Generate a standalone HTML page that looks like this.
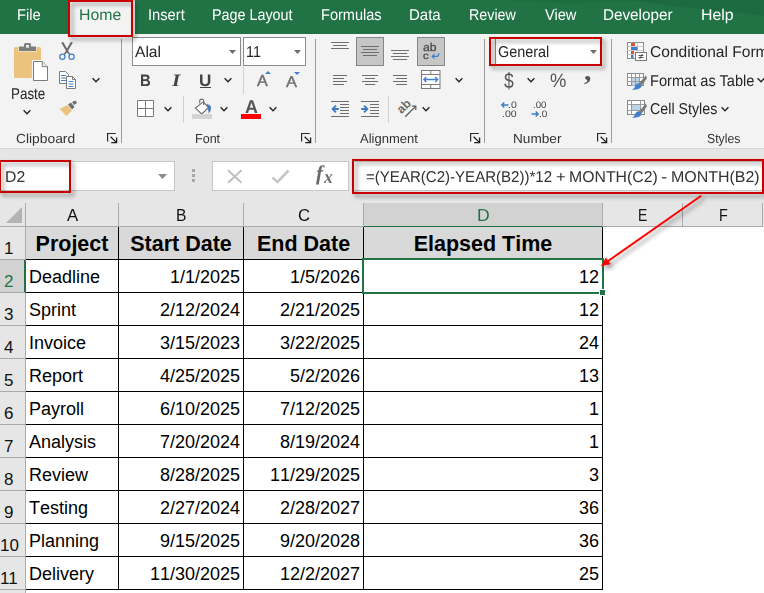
<!DOCTYPE html>
<html lang="en">
<head>
<meta charset="utf-8">
<title>Excel - Elapsed Time</title>
<style>
*{box-sizing:border-box;margin:0;padding:0}
html,body{width:764px;height:593px;overflow:hidden;background:#fff}
body{font-family:"Liberation Sans",sans-serif;color:#262626;position:relative}
#app{position:absolute;left:0;top:0;width:764px;height:593px;overflow:hidden;background:#fff}
.abs{position:absolute}
.t{position:absolute;white-space:nowrap;line-height:1;transform-origin:0 0;text-rendering:geometricPrecision}
#tabs{position:absolute;left:0;top:0;width:764px;height:34px;background:#217346;overflow:hidden}
#ribbon{position:absolute;left:0;top:34px;width:764px;height:114px;background:#f3f3f3}
#ribline{position:absolute;left:0;top:148px;width:764px;height:1px;background:#d4d4d4}
.gsep{position:absolute;width:1px;top:39px;height:104px;background:#9c9c9c}
.ssep{position:absolute;width:1px;background:#d0d0d0}
.ico{position:absolute;overflow:visible}
#fbar{position:absolute;left:0;top:149px;width:764px;height:55px;background:#e6e6e6}
.fbox{position:absolute;background:#fff;border:1px solid #c6c6c6}
.red{position:absolute;border:2px solid #c80000;filter:drop-shadow(3px 3px 2.2px rgba(0,0,0,.42))}
#grid{position:absolute;left:0;top:204px;width:764px;height:389px;background:#fff}
.ch{position:absolute;top:203px;height:24px;background:#e6e6e6;border-right:1px solid #ababab;border-bottom:1px solid #ababab}
.rh{position:absolute;left:0;width:26px;background:#e6e6e6;border-right:1px solid #ababab;border-bottom:1px solid #ababab}
.c{position:absolute;border-right:1px solid #000;border-bottom:1px solid #000;font-size:18px;color:#000;white-space:nowrap;font-kerning:none}
.c span{position:absolute;line-height:1;top:7.79px}
.c.l span{left:3px}
.c.r span{right:3px}
.c.h{background:#d9d9d9;font-weight:bold;font-size:21.5px}
.c.h span{left:0;right:0;text-align:center;top:7px}
</style>
</head>
<body>
<div id="app">
<div id="tabs"><svg class="ico" style="left:0;top:0" width="764" height="34" viewBox="0 0 764 34"><path d="M634 0H764V16Q730 11 700 9Q665 6 634 0Z" fill="#1e6a40"/><path d="M500 0H640Q600 4 560 3Q530 3 500 0Z" fill="#1f6e42"/></svg></div>
<div id="ribbon"></div>
<div id="ribline"></div>
<div class="abs" style="left:70px;top:2px;width:62px;height:34px;background:#f3f3f3"></div>
<div class="t" style="left:16.73px;top:8px;font-size:15.7px;transform:scaleX(0.9376);color:#fff">File</div>
<div class="t" style="left:79.34px;top:8px;font-size:15.7px;transform:scaleX(1.0100);color:#217346">Home</div>
<div class="t" style="left:148.29px;top:8px;font-size:15.7px;transform:scaleX(0.9377);color:#fff">Insert</div>
<div class="t" style="left:212.46px;top:8px;font-size:15.7px;transform:scaleX(0.9141);color:#fff">Page Layout</div>
<div class="t" style="left:320.54px;top:8px;font-size:15.7px;transform:scaleX(0.9276);color:#fff">Formulas</div>
<div class="t" style="left:408.80px;top:8px;font-size:15.7px;transform:scaleX(0.9563);color:#fff">Data</div>
<div class="t" style="left:468.76px;top:8px;font-size:15.7px;transform:scaleX(0.9114);color:#fff">Review</div>
<div class="t" style="left:544.50px;top:8px;font-size:15.7px;transform:scaleX(0.9304);color:#fff">View</div>
<div class="t" style="left:603.39px;top:8px;font-size:15.7px;transform:scaleX(0.9714);color:#fff">Developer</div>
<div class="t" style="left:700.74px;top:8px;font-size:15.7px;transform:scaleX(1.0098);color:#fff">Help</div>
<div class="gsep" style="left:121px"></div>
<div class="gsep" style="left:315px"></div>
<div class="gsep" style="left:484px"></div>
<div class="gsep" style="left:611px"></div>
<svg class="ico" style="left:13px;top:42px" width="36" height="40" viewBox="0 0 36 40">
<rect x="1" y="5" width="27" height="31" rx="1.5" fill="#ecc37c"/>
<path d="M6 4.5H11V2.5Q11 1 12.5 1H16.5Q18 1 18 2.5V4.5H23V9H6Z" fill="#7d7d7d" stroke="#f3f3f3" stroke-width="1.2" paint-order="stroke"/>
<rect x="13.1" y="2.9" width="2.8" height="2.8" fill="#f3f3f3"/>
<path d="M20.5 19.5H29.3L34.5 24.7V38.5H20.5Z" fill="#fff" stroke="#f3f3f3" stroke-width="3.2"/>
<path d="M20.5 19.5H29.3L34.5 24.7V38.5H20.5Z" fill="#fff" stroke="#7a7a7a" stroke-width="1"/>
<path d="M29.3 19.5V24.7H34.5" fill="#f0f0f0" stroke="#7a7a7a" stroke-width="1"/>
</svg>
<div class="t" style="left:10.83px;top:87px;font-size:15.7px;transform:scaleX(0.8549);color:#262626">Paste</div>
<svg class="ico" style="left:22.2px;top:108.1px" width="10" height="8" viewBox="0 0 10 8"><path d="M1.6 2.3L5 5.7L8.4 2.3" stroke="#262626" stroke-width="1.4" fill="none"/></svg>
<svg class="ico" style="left:58px;top:41px" width="18" height="20" viewBox="0 0 18 20">
<path d="M3.1 1.6L5.3 1.1L10 9.6L12.4 13.2L11.3 13.9L8.9 11.2Z" fill="#6a6a6a"/>
<path d="M14.9 1.6L12.7 1.1L8 9.6L5.6 13.2L6.7 13.9L9.1 11.2Z" fill="#6a6a6a"/>
<circle cx="4.4" cy="15.7" r="2.6" fill="none" stroke="#3f7fcb" stroke-width="1.25"/>
<circle cx="13.6" cy="15.7" r="2.6" fill="none" stroke="#3f7fcb" stroke-width="1.25"/>
</svg>
<svg class="ico" style="left:58px;top:70px" width="20" height="20" viewBox="0 0 20 20">
<path d="M1.5 1.5H7.5L10.5 4.5V13.5H1.5Z" fill="#fff" stroke="#7a7a7a"/>
<path d="M3 5.5H8M3 8H8M3 10.5H8" stroke="#3f7fcb" stroke-width="1"/>
<path d="M8.5 6.5H14.5L17.5 9.5V18.5H8.5Z" fill="#fff" stroke="#7a7a7a"/>
<path d="M14.5 6.5V9.5H17.5" fill="none" stroke="#7a7a7a"/>
<path d="M10.5 11.5H15.5M10.5 14H15.5M10.5 16.5H15.5" stroke="#3f7fcb" stroke-width="1"/>
</svg>
<svg class="ico" style="left:91.2px;top:76.1px" width="10" height="8" viewBox="0 0 10 8"><path d="M1.6 2.3L5 5.7L8.4 2.3" stroke="#262626" stroke-width="1.4" fill="none"/></svg>
<svg class="ico" style="left:59px;top:100px" width="19" height="17" viewBox="0 0 19 17">
<path d="M0.5 9L8.5 5L13 10.5L7.5 16Z" fill="#ecc37c"/>
<path d="M9 4.5L12 2.5L15.5 7L13 9.5Z" fill="#6f6f6f"/>
<path d="M13 2L16.5 0.5L18 3L15 5Z" fill="#6f6f6f"/>
</svg>
<div class="t" style="left:15.71px;top:132px;font-size:13.1px;transform:scaleX(1.0550);color:#333">Clipboard</div>
<svg class="ico" style="left:107px;top:133px" width="11" height="11" viewBox="0 0 11 11"><path d="M0.6 8.5V0.5H8.8" stroke="#2a2a2a" stroke-width="1.2" fill="none"/><path d="M3.6 3.8L9.4 9.4M9.6 4.4V9.6H4.2" stroke="#1e1e1e" stroke-width="1.3" fill="none"/></svg>
<div class="fbox" style="left:132px;top:37px;width:109px;height:29px;border-color:#8c8c8c"></div>
<div class="t" style="left:135.10px;top:45px;font-size:15.7px;transform:scaleX(0.9941);color:#262626">Alal</div>
<svg class="ico" style="left:228.5px;top:49.5px" width="7" height="4" viewBox="0 0 7 4"><path d="M0 0H7L3.5 4Z" fill="#6e6e6e"/></svg>
<div class="fbox" style="left:243px;top:37px;width:63px;height:29px;border-color:#8c8c8c"></div>
<div class="t" style="left:246.06px;top:45px;font-size:15.7px;transform:scaleX(0.9123);color:#262626">11</div>
<svg class="ico" style="left:293.5px;top:49.5px" width="7" height="4" viewBox="0 0 7 4"><path d="M0 0H7L3.5 4Z" fill="#6e6e6e"/></svg>
<div class="t" style="left:139.59px;top:73px;font-size:16.58px;transform:scaleX(0.8998);font-weight:bold;color:#444">B</div>
<div class="t" style="left:172.21px;top:72px;font-size:17.4px;transform:scaleX(1.2099);font-family:'Liberation Serif',serif;font-style:italic;font-weight:bold;color:#444">I</div>
<div class="t" style="left:199.37px;top:73px;font-size:16.63px;transform:scaleX(1.0280);font-weight:bold;color:#444">U</div>
<div class="abs" style="left:200px;top:87px;width:11px;height:1px;background:#444"></div>
<svg class="ico" style="left:223.2px;top:76.1px" width="10" height="8" viewBox="0 0 10 8"><path d="M1.6 2.3L5 5.7L8.4 2.3" stroke="#262626" stroke-width="1.4" fill="none"/></svg>
<div class="ssep" style="left:243px;top:67px;height:27px"></div>
<div class="t" style="left:257.00px;top:74px;font-size:15.88px;transform:scaleX(1.0189);-webkit-text-stroke:0.45px #727272;color:#727272">A</div>
<svg class="ico" style="left:265px;top:71px" width="6" height="3" viewBox="0 0 6 3"><path d="M0 3H6L3 0Z" fill="#3f7fcb"/></svg>
<div class="t" style="left:286.00px;top:75px;font-size:15.6px;transform:scaleX(1.0564);-webkit-text-stroke:0.45px #727272;color:#727272">A</div>
<svg class="ico" style="left:294px;top:72px" width="6" height="3" viewBox="0 0 6 3"><path d="M0 0H6L3 3Z" fill="#3f7fcb"/></svg>
<svg class="ico" style="left:136px;top:99px" width="19" height="19" viewBox="0 0 19 19"><path d="M1.5 1.5H17.5V17.5H1.5ZM9.5 1.5V17.5M1.5 9.5H17.5" stroke="#7a7a7a" stroke-width="1" fill="#fff"/></svg>
<svg class="ico" style="left:163.2px;top:105.1px" width="10" height="8" viewBox="0 0 10 8"><path d="M1.6 2.3L5 5.7L8.4 2.3" stroke="#262626" stroke-width="1.4" fill="none"/></svg>
<div class="ssep" style="left:183px;top:96px;height:27px"></div>
<svg class="ico" style="left:191px;top:98px" width="22" height="22" viewBox="0 0 22 22">
<path d="M15.4 6Q19.6 6.6 20.1 9.8Q20.3 12.6 17.6 15.4L17 10.2Z" fill="#3f7fcb"/>
<path d="M12.3 3.9L17.5 9.6L10.7 15.9L4.4 10.1Z" fill="#fff" stroke="#6a6a6a" stroke-width="1.1"/>
<path d="M8.7 5.6V2.6Q8.9 1.1 10.7 1.1Q12.5 1.1 12.7 2.6V7" fill="none" stroke="#6a6a6a" stroke-width="1.1"/>
<rect x="1.1" y="16.1" width="19.9" height="4.8" fill="#d2d2d2"/>
</svg>
<svg class="ico" style="left:219.2px;top:105.1px" width="10" height="8" viewBox="0 0 10 8"><path d="M1.6 2.3L5 5.7L8.4 2.3" stroke="#262626" stroke-width="1.4" fill="none"/></svg>
<div class="t" style="left:244.55px;top:98px;font-size:18.47px;transform:scaleX(0.9697);font-weight:bold;color:#555">A</div>
<div class="abs" style="left:241px;top:114px;width:20px;height:5px;background:#ff0000"></div>
<svg class="ico" style="left:268.2px;top:105.1px" width="10" height="8" viewBox="0 0 10 8"><path d="M1.6 2.3L5 5.7L8.4 2.3" stroke="#262626" stroke-width="1.4" fill="none"/></svg>
<div class="t" style="left:194.94px;top:132px;font-size:13.1px;transform:scaleX(0.9584);color:#333">Font</div>
<svg class="ico" style="left:300.9px;top:133px" width="11" height="11" viewBox="0 0 11 11"><path d="M0.6 8.5V0.5H8.8" stroke="#2a2a2a" stroke-width="1.2" fill="none"/><path d="M3.6 3.8L9.4 9.4M9.6 4.4V9.6H4.2" stroke="#1e1e1e" stroke-width="1.3" fill="none"/></svg>
<div class="abs" style="left:356px;top:37px;width:28px;height:29px;background:#c6c6c6;border:1px solid #868686"></div>
<div class="abs" style="left:417px;top:37px;width:28px;height:29px;background:#c6c6c6;border:1px solid #868686"></div>
<svg class="ico" style="left:331px;top:42px" width="18" height="8" viewBox="0 0 18 8"><path d="M0 0.5H18M2 3.5H16M0 6.5H18" stroke="#6e6e6e" stroke-width="1" fill="none"/></svg>
<svg class="ico" style="left:361px;top:46px" width="18" height="11" viewBox="0 0 18 11"><path d="M0 0.5H18M2 3.5H16M0 6.5H18M2 9.5H16" stroke="#6e6e6e" stroke-width="1" fill="none"/></svg>
<svg class="ico" style="left:391px;top:50px" width="18" height="11" viewBox="0 0 18 11"><path d="M0 0.5H18M2 3.5H16M0 6.5H18M2 9.5H16" stroke="#6e6e6e" stroke-width="1" fill="none"/></svg>
<div class="t" style="left:423.31px;top:43px;font-size:11.29px;transform:scaleX(1.0809);-webkit-text-stroke:0.3px #4a4a4a;color:#4a4a4a">ab</div>
<div class="t" style="left:423.34px;top:52px;font-size:10.0px;transform:scaleX(1.1494);-webkit-text-stroke:0.3px #4a4a4a;color:#4a4a4a">c</div>
<svg class="ico" style="left:431px;top:52px" width="9" height="8" viewBox="0 0 9 8"><path d="M7.6 1.2V2.2Q7.6 4.4 5.4 4.4H1.4M3.5 2.2L1.2 4.4L3.5 6.6" stroke="#3f7fcb" stroke-width="1.25" fill="none"/></svg>
<svg class="ico" style="left:333px;top:75px" width="14" height="11" viewBox="0 0 14 11"><path d="M0 0.5H14M0 3.5H11M0 6.5H14M0 9.5H11" stroke="#6e6e6e" stroke-width="1" fill="none"/></svg>
<svg class="ico" style="left:362px;top:75px" width="16" height="11" viewBox="0 0 16 11"><path d="M0 0.5H16M3 3.5H13M0 6.5H16M3 9.5H13" stroke="#6e6e6e" stroke-width="1" fill="none"/></svg>
<svg class="ico" style="left:393px;top:75px" width="14" height="11" viewBox="0 0 14 11"><path d="M0 0.5H14M3 3.5H14M0 6.5H14M3 9.5H14" stroke="#6e6e6e" stroke-width="1" fill="none"/></svg>
<svg class="ico" style="left:421px;top:70px" width="20" height="19" viewBox="0 0 20 19">
<rect x="0.5" y="0.5" width="18.5" height="18" fill="#fff" stroke="#7a7a7a"/>
<path d="M0.5 4.5H19M0.5 14.5H19M9.75 0.5V4.5M9.75 14.5V18.5" stroke="#7a7a7a" fill="none"/>
<path d="M3 9.5H16.5M5.3 7L2.8 9.5L5.3 12M14.2 7L16.7 9.5L14.2 12" stroke="#3f7fcb" stroke-width="1.3" fill="none"/>
</svg>
<svg class="ico" style="left:454.2px;top:76.1px" width="10" height="8" viewBox="0 0 10 8"><path d="M1.6 2.3L5 5.7L8.4 2.3" stroke="#262626" stroke-width="1.4" fill="none"/></svg>
<svg class="ico" style="left:331px;top:100px" width="18" height="18" viewBox="0 0 18 18">
<path d="M0 1.5H18M9 4.5H18M9 7.5H18M9 10.5H18M9 13.5H18M0 16.5H18" stroke="#6e6e6e" fill="none"/>
<path d="M0.3 9L4.3 5L5.6 6.3L3.9 8H7.8V10H3.9L5.6 11.7L4.3 13Z" fill="#3c79c3"/></svg>
<svg class="ico" style="left:361px;top:100px" width="18" height="18" viewBox="0 0 18 18">
<path d="M0 1.5H18M9 4.5H18M9 7.5H18M9 10.5H18M9 13.5H18M0 16.5H18" stroke="#6e6e6e" fill="none"/>
<path d="M7.7 9L3.7 5L2.4 6.3L4.1 8H0.2V10H4.1L2.4 11.7L3.7 13Z" fill="#3c79c3"/></svg>
<div class="ssep" style="left:388px;top:96px;height:27px"></div>
<svg class="ico" style="left:394px;top:96px" width="26" height="24" viewBox="394 96 26 24"><text x="404.0" y="110.3" font-family="Liberation Sans, sans-serif" font-size="12.3" font-weight="bold" fill="#6a6a6a" text-anchor="middle" transform="rotate(-45 404.0 106.5)" style="text-rendering:geometricPrecision">ab</text><path d="M405.2 116.7L415.6 106.4" stroke="#5a5a5a" stroke-width="1.3" fill="none"/><path d="M411.9 106.2H415.8V110.1" stroke="#5a5a5a" stroke-width="1.2" fill="none"/></svg>
<svg class="ico" style="left:421.2px;top:105.1px" width="10" height="8" viewBox="0 0 10 8"><path d="M1.6 2.3L5 5.7L8.4 2.3" stroke="#262626" stroke-width="1.4" fill="none"/></svg>
<div class="t" style="left:360.20px;top:132px;font-size:13.1px;transform:scaleX(0.9923);color:#333">Alignment</div>
<svg class="ico" style="left:469.8px;top:133px" width="11" height="11" viewBox="0 0 11 11"><path d="M0.6 8.5V0.5H8.8" stroke="#2a2a2a" stroke-width="1.2" fill="none"/><path d="M3.6 3.8L9.4 9.4M9.6 4.4V9.6H4.2" stroke="#1e1e1e" stroke-width="1.3" fill="none"/></svg>
<div class="fbox" style="left:495px;top:37px;width:107px;height:29px;border-color:#8c8c8c"></div>
<div class="t" style="left:497.91px;top:45px;font-size:15.7px;transform:scaleX(0.9185);color:#262626">General</div>
<svg class="ico" style="left:589.5px;top:49.5px" width="7" height="4" viewBox="0 0 7 4"><path d="M0 0H7L3.5 4Z" fill="#6e6e6e"/></svg>
<div class="t" style="left:503.52px;top:70px;font-size:21.6px;transform:scaleX(0.8124);color:#555">$</div>
<svg class="ico" style="left:526.2px;top:76.1px" width="10" height="8" viewBox="0 0 10 8"><path d="M1.6 2.3L5 5.7L8.4 2.3" stroke="#262626" stroke-width="1.4" fill="none"/></svg>
<div class="t" style="left:549.56px;top:72px;font-size:19.43px;transform:scaleX(0.9477);color:#555">%</div>
<div class="t" style="left:584.12px;top:58px;font-size:27.11px;transform:scaleX(1.1066);font-family:'Liberation Serif',serif;font-weight:bold;color:#555">,</div>
<div class="t" style="left:507.86px;top:101px;font-size:9.47px;transform:scaleX(1.1084);color:#444">.0</div>
<div class="t" style="left:501.95px;top:110px;font-size:9.47px;transform:scaleX(1.1124);color:#444">.00</div>
<svg class="ico" style="left:501px;top:102px" width="8" height="6" viewBox="0 0 8 6"><path d="M0.8 3H7.5M3.3 0.5L0.8 3L3.3 5.5" stroke="#3f7fcb" stroke-width="1.5" fill="none"/></svg>
<div class="t" style="left:533.43px;top:101px;font-size:9.47px;transform:scaleX(1.0204);color:#444">.00</div>
<div class="t" style="left:538.61px;top:110px;font-size:9.47px;transform:scaleX(1.0485);color:#444">.0</div>
<svg class="ico" style="left:531px;top:111px" width="8" height="6" viewBox="0 0 8 6"><path d="M0.5 3H7.2M4.7 0.5L7.2 3L4.7 5.5" stroke="#3f7fcb" stroke-width="1.5" fill="none"/></svg>
<div class="t" style="left:512.56px;top:132px;font-size:13.1px;transform:scaleX(1.0409);color:#333">Number</div>
<svg class="ico" style="left:596.9px;top:133px" width="11" height="11" viewBox="0 0 11 11"><path d="M0.6 8.5V0.5H8.8" stroke="#2a2a2a" stroke-width="1.2" fill="none"/><path d="M3.6 3.8L9.4 9.4M9.6 4.4V9.6H4.2" stroke="#1e1e1e" stroke-width="1.3" fill="none"/></svg>
<svg class="ico" style="left:627px;top:42px" width="20" height="20" viewBox="0 0 20 20">
<rect x="0.5" y="0.5" width="16" height="16" fill="#fff" stroke="#8a8a8a"/>
<path d="M0.5 4.5H16.5M0.5 8.5H16.5M0.5 12.5H16.5M4.5 0.5V16.5M10.5 0.5V16.5" stroke="#c8c8c8" fill="none"/>
<rect x="4" y="1" width="4" height="3" fill="#e0533c"/><rect x="4" y="5" width="6.5" height="3" fill="#3f7fcb"/><rect x="4" y="9" width="3" height="3" fill="#e0533c"/><rect x="4" y="13" width="2.5" height="3" fill="#3f7fcb"/>
<rect x="8.5" y="10.5" width="11" height="8" fill="#fff" stroke="#7a7a7a"/>
<path d="M11.5 13.5H16.5M11.5 15.5H16.5M15.3 12L12.7 17" stroke="#444" stroke-width="0.9" fill="none"/>
</svg>
<div class="t" style="left:649.56px;top:45px;font-size:15.7px;transform:scaleX(0.9928);color:#262626">Conditional Formatting</div>
<svg class="ico" style="left:627px;top:73px" width="20" height="18" viewBox="0 0 20 18">
<rect x="0.5" y="0.5" width="16" height="12" fill="#fff" stroke="#8a8a8a"/>
<rect x="4.5" y="4.5" width="8" height="8" fill="#bdd3ea"/>
<path d="M0.5 4.5H16.5M0.5 8.5H16.5M4.5 0.5V12.5M8.5 0.5V12.5M12.5 0.5V12.5" stroke="#9a9a9a" fill="none"/>
<path d="M19 2.3L19.9 5.6L14.6 12.6L11.8 10.4Z" fill="#7a7a7a"/><path d="M11.8 10.2L14.8 12.7Q13.6 16.9 5 16.7Q8 15 8.6 12Q10 10 11.8 10.2Z" fill="#3f7fcb"/></svg>
<div class="t" style="left:649.74px;top:74px;font-size:15.7px;transform:scaleX(0.9306);color:#262626">Format as Table</div>
<svg class="ico" style="left:755.7px;top:76.1px" width="10" height="8" viewBox="0 0 10 8"><path d="M1.6 2.3L5 5.7L8.4 2.3" stroke="#262626" stroke-width="1.4" fill="none"/></svg>
<svg class="ico" style="left:627px;top:100px" width="20" height="19" viewBox="0 0 20 19">
<rect x="0.5" y="0.5" width="17" height="14" fill="#fff" stroke="#8a8a8a"/>
<rect x="4.5" y="4.5" width="9" height="6" fill="#bdd3ea"/>
<path d="M0.5 4.5H17.5M0.5 10.5H17.5M4.5 0.5V14.5M13.5 0.5V14.5" stroke="#9a9a9a" fill="none"/>
<g transform="translate(0,1)"><path d="M19 2.3L19.9 5.6L14.6 12.6L11.8 10.4Z" fill="#7a7a7a"/><path d="M11.8 10.2L14.8 12.7Q13.6 16.9 5 16.7Q8 15 8.6 12Q10 10 11.8 10.2Z" fill="#3f7fcb"/></g></svg>
<div class="t" style="left:650.22px;top:102px;font-size:15.7px;transform:scaleX(0.9086);color:#262626">Cell Styles</div>
<svg class="ico" style="left:720.2px;top:104.6px" width="10" height="8" viewBox="0 0 10 8"><path d="M1.6 2.3L5 5.7L8.4 2.3" stroke="#262626" stroke-width="1.4" fill="none"/></svg>
<div class="t" style="left:706.80px;top:132px;font-size:13.1px;transform:scaleX(0.9362);color:#333">Styles</div>
<div id="fbar"></div>
<div class="fbox" style="left:-1px;top:161px;width:176px;height:30px"></div>
<div class="t" style="left:4.94px;top:170px;font-size:15.7px;transform:scaleX(1.0056);color:#333">D2</div>
<svg class="ico" style="left:158px;top:174px" width="9" height="5" viewBox="0 0 9 5"><path d="M0 0H9L4.5 5Z" fill="#8a8a8a"/></svg>
<svg class="ico" style="left:192px;top:169px" width="3" height="13" viewBox="0 0 3 13"><rect x="0" y="0" width="3" height="3" fill="#a9a9a9"/><rect x="0" y="5" width="3" height="3" fill="#a9a9a9"/><rect x="0" y="10" width="3" height="3" fill="#a9a9a9"/></svg>
<div class="fbox" style="left:212px;top:161px;width:137px;height:30px"></div>
<svg class="ico" style="left:226px;top:169px" width="17" height="15" viewBox="0 0 17 15"><path d="M2 1.2L15.5 13.8M15.5 1.2L2 13.8" stroke="#c0c0c0" stroke-width="2" fill="none"/></svg>
<svg class="ico" style="left:271px;top:169px" width="19" height="15" viewBox="0 0 19 15"><path d="M1.5 8.5L6.5 13L17.5 1.5" stroke="#c6c6c6" stroke-width="2.6" fill="none"/></svg>
<div class="t" style="left:316.30px;top:163px;font-size:21.04px;transform:scaleX(0.9964);font-family:'Liberation Serif',serif;font-style:italic;font-weight:bold;color:#6a6a6a">f</div>
<div class="t" style="left:324.22px;top:168px;font-size:19.35px;transform:scaleX(0.9011);font-family:'Liberation Serif',serif;font-style:italic;font-weight:bold;color:#6a6a6a">x</div>
<div class="fbox" style="left:353px;top:161px;width:412px;height:30px"></div>
<div class="abs" style="left:0;top:0"><div class="t" style="left:365.78px;top:170px;font-size:15.7px;transform:scaleX(0.9595);color:#333">=(YEAR(C2)-YEAR(B2))*12</div><div class="t" style="left:555.51px;top:170px;font-size:15.7px;transform:scaleX(1.0581);color:#333">+</div><div class="t" style="left:569.04px;top:170px;font-size:15.7px;transform:scaleX(1.0087);color:#333">MONTH(C2)</div><div class="t" style="left:660.60px;top:170px;font-size:15.7px;transform:scaleX(1.2000);color:#333">-</div><div class="t" style="left:671.03px;top:170px;font-size:15.7px;transform:scaleX(1.0176);color:#333">MONTH(B2)</div></div>
<div id="grid"></div>
<div class="ch" style="left:0;width:26px"></div>
<svg class="ico" style="left:6px;top:207px" width="16" height="16" viewBox="0 0 16 16"><path d="M16 0V16H0Z" fill="#b4b4b4"/></svg>
<div class="ch" style="left:26px;width:93px"></div>
<div class="t" style="left:66.90px;top:207px;font-size:17px;transform:scaleX(0.9867);text-rendering:auto;color:#111">A</div>
<div class="ch" style="left:119px;width:125px"></div>
<div class="t" style="left:175.95px;top:207px;font-size:17px;transform:scaleX(0.9189);text-rendering:auto;color:#111">B</div>
<div class="ch" style="left:244px;width:120px"></div>
<div class="t" style="left:297.56px;top:207px;font-size:17px;transform:scaleX(0.9860);text-rendering:auto;color:#111">C</div>
<div class="ch" style="left:364px;width:239px;background:#d2d2d2;border-bottom:2px solid #217346;height:25px"></div>
<div class="t" style="left:476.81px;top:207px;font-size:17px;transform:scaleX(1.0341);text-rendering:auto;color:#217346">D</div>
<div class="ch" style="left:603px;width:80px"></div>
<div class="t" style="left:638.17px;top:207px;font-size:17px;transform:scaleX(0.8211);text-rendering:auto;color:#111">E</div>
<div class="ch" style="left:683px;width:80px"></div>
<div class="t" style="left:718.84px;top:207px;font-size:17px;transform:scaleX(0.8471);text-rendering:auto;color:#111">F</div>
<div class="ch" style="left:763px;width:2px;border:none"></div>
<div class="rh" style="top:227px;height:33px"></div>
<div class="t" style="left:4px;top:240px;font-size:17px;text-rendering:auto;color:#111">1</div>
<div class="c h" style="left:26px;top:227px;width:93px;height:33px"><span>Project</span></div>
<div class="c h" style="left:119px;top:227px;width:125px;height:33px"><span>Start Date</span></div>
<div class="c h" style="left:244px;top:227px;width:120px;height:33px"><span>End Date</span></div>
<div class="c h" style="left:364px;top:227px;width:239px;height:33px"><span>Elapsed Time</span></div>
<div class="rh" style="top:260px;height:33px;background:#d2d2d2;border-right:2px solid #217346"></div>
<div class="t" style="left:4px;top:273px;font-size:17px;text-rendering:auto;color:#217346">2</div>
<div class="c l" style="left:26px;top:260px;width:93px;height:33px"><span>Deadline</span></div>
<div class="c r" style="left:119px;top:260px;width:125px;height:33px"><span>1/1/2025</span></div>
<div class="c r" style="left:244px;top:260px;width:120px;height:33px"><span>1/5/2026</span></div>
<div class="c r" style="left:364px;top:260px;width:239px;height:33px"><span>12</span></div>
<div class="rh" style="top:293px;height:33px"></div>
<div class="t" style="left:4px;top:306px;font-size:17px;text-rendering:auto;color:#111">3</div>
<div class="c l" style="left:26px;top:293px;width:93px;height:33px"><span>Sprint</span></div>
<div class="c r" style="left:119px;top:293px;width:125px;height:33px"><span>2/12/2024</span></div>
<div class="c r" style="left:244px;top:293px;width:120px;height:33px"><span>2/21/2025</span></div>
<div class="c r" style="left:364px;top:293px;width:239px;height:33px"><span>12</span></div>
<div class="rh" style="top:326px;height:33px"></div>
<div class="t" style="left:4px;top:339px;font-size:17px;text-rendering:auto;color:#111">4</div>
<div class="c l" style="left:26px;top:326px;width:93px;height:33px"><span>Invoice</span></div>
<div class="c r" style="left:119px;top:326px;width:125px;height:33px"><span>3/15/2023</span></div>
<div class="c r" style="left:244px;top:326px;width:120px;height:33px"><span>3/22/2025</span></div>
<div class="c r" style="left:364px;top:326px;width:239px;height:33px"><span>24</span></div>
<div class="rh" style="top:359px;height:33px"></div>
<div class="t" style="left:4px;top:372px;font-size:17px;text-rendering:auto;color:#111">5</div>
<div class="c l" style="left:26px;top:359px;width:93px;height:33px"><span>Report</span></div>
<div class="c r" style="left:119px;top:359px;width:125px;height:33px"><span>4/25/2025</span></div>
<div class="c r" style="left:244px;top:359px;width:120px;height:33px"><span>5/2/2026</span></div>
<div class="c r" style="left:364px;top:359px;width:239px;height:33px"><span>13</span></div>
<div class="rh" style="top:392px;height:33px"></div>
<div class="t" style="left:4px;top:405px;font-size:17px;text-rendering:auto;color:#111">6</div>
<div class="c l" style="left:26px;top:392px;width:93px;height:33px"><span>Payroll</span></div>
<div class="c r" style="left:119px;top:392px;width:125px;height:33px"><span>6/10/2025</span></div>
<div class="c r" style="left:244px;top:392px;width:120px;height:33px"><span>7/12/2025</span></div>
<div class="c r" style="left:364px;top:392px;width:239px;height:33px"><span>1</span></div>
<div class="rh" style="top:425px;height:33px"></div>
<div class="t" style="left:4px;top:438px;font-size:17px;text-rendering:auto;color:#111">7</div>
<div class="c l" style="left:26px;top:425px;width:93px;height:33px"><span>Analysis</span></div>
<div class="c r" style="left:119px;top:425px;width:125px;height:33px"><span>7/20/2024</span></div>
<div class="c r" style="left:244px;top:425px;width:120px;height:33px"><span>8/19/2024</span></div>
<div class="c r" style="left:364px;top:425px;width:239px;height:33px"><span>1</span></div>
<div class="rh" style="top:458px;height:33px"></div>
<div class="t" style="left:4px;top:471px;font-size:17px;text-rendering:auto;color:#111">8</div>
<div class="c l" style="left:26px;top:458px;width:93px;height:33px"><span>Review</span></div>
<div class="c r" style="left:119px;top:458px;width:125px;height:33px"><span>8/28/2025</span></div>
<div class="c r" style="left:244px;top:458px;width:120px;height:33px"><span>11/29/2025</span></div>
<div class="c r" style="left:364px;top:458px;width:239px;height:33px"><span>3</span></div>
<div class="rh" style="top:491px;height:33px"></div>
<div class="t" style="left:4px;top:504px;font-size:17px;text-rendering:auto;color:#111">9</div>
<div class="c l" style="left:26px;top:491px;width:93px;height:33px"><span>Testing</span></div>
<div class="c r" style="left:119px;top:491px;width:125px;height:33px"><span>2/27/2024</span></div>
<div class="c r" style="left:244px;top:491px;width:120px;height:33px"><span>2/28/2027</span></div>
<div class="c r" style="left:364px;top:491px;width:239px;height:33px"><span>36</span></div>
<div class="rh" style="top:524px;height:33px"></div>
<div class="t" style="left:0px;top:537px;font-size:17px;text-rendering:auto;color:#111">10</div>
<div class="c l" style="left:26px;top:524px;width:93px;height:33px"><span>Planning</span></div>
<div class="c r" style="left:119px;top:524px;width:125px;height:33px"><span>9/15/2025</span></div>
<div class="c r" style="left:244px;top:524px;width:120px;height:33px"><span>9/20/2028</span></div>
<div class="c r" style="left:364px;top:524px;width:239px;height:33px"><span>36</span></div>
<div class="rh" style="top:557px;height:33px"></div>
<div class="t" style="left:0px;top:570px;font-size:17px;text-rendering:auto;color:#111">11</div>
<div class="c l" style="left:26px;top:557px;width:93px;height:33px"><span>Delivery</span></div>
<div class="c r" style="left:119px;top:557px;width:125px;height:33px"><span>11/30/2025</span></div>
<div class="c r" style="left:244px;top:557px;width:120px;height:33px"><span>12/2/2027</span></div>
<div class="c r" style="left:364px;top:557px;width:239px;height:33px"><span>25</span></div>
<div class="rh" style="top:590px;height:4px"></div>
<div class="abs" style="left:362px;top:258px;width:242px;height:36px;border:2px solid #217346"></div>
<div class="abs" style="left:599px;top:289px;width:7px;height:7px;background:#217346;border:1px solid #fff"></div>
<div class="red" style="left:68px;top:0px;width:65px;height:37px"></div>
<div class="abs" style="left:133px;top:0;width:2px;height:37px;background:#c7cfce"></div>
<div class="red" style="left:489px;top:37px;width:113px;height:29px"></div>
<div class="red" style="left:-1px;top:160px;width:72px;height:33px"></div>
<div class="red" style="left:352px;top:158.5px;width:411.5px;height:35px"></div>
<svg class="ico" style="left:590px;top:190px;filter:drop-shadow(3px 3px 2px rgba(0,0,0,.4))" width="130" height="90" viewBox="590 190 130 90"><path d="M701.2 195.8L607 261.8" stroke="#ff0000" stroke-width="2" fill="none"/><path d="M601.3 265.8L606 258L610.2 264Z" fill="#ff0000" stroke="#ff0000" stroke-width="0.6" stroke-linejoin="round"/></svg>
</div>
</body>
</html>
